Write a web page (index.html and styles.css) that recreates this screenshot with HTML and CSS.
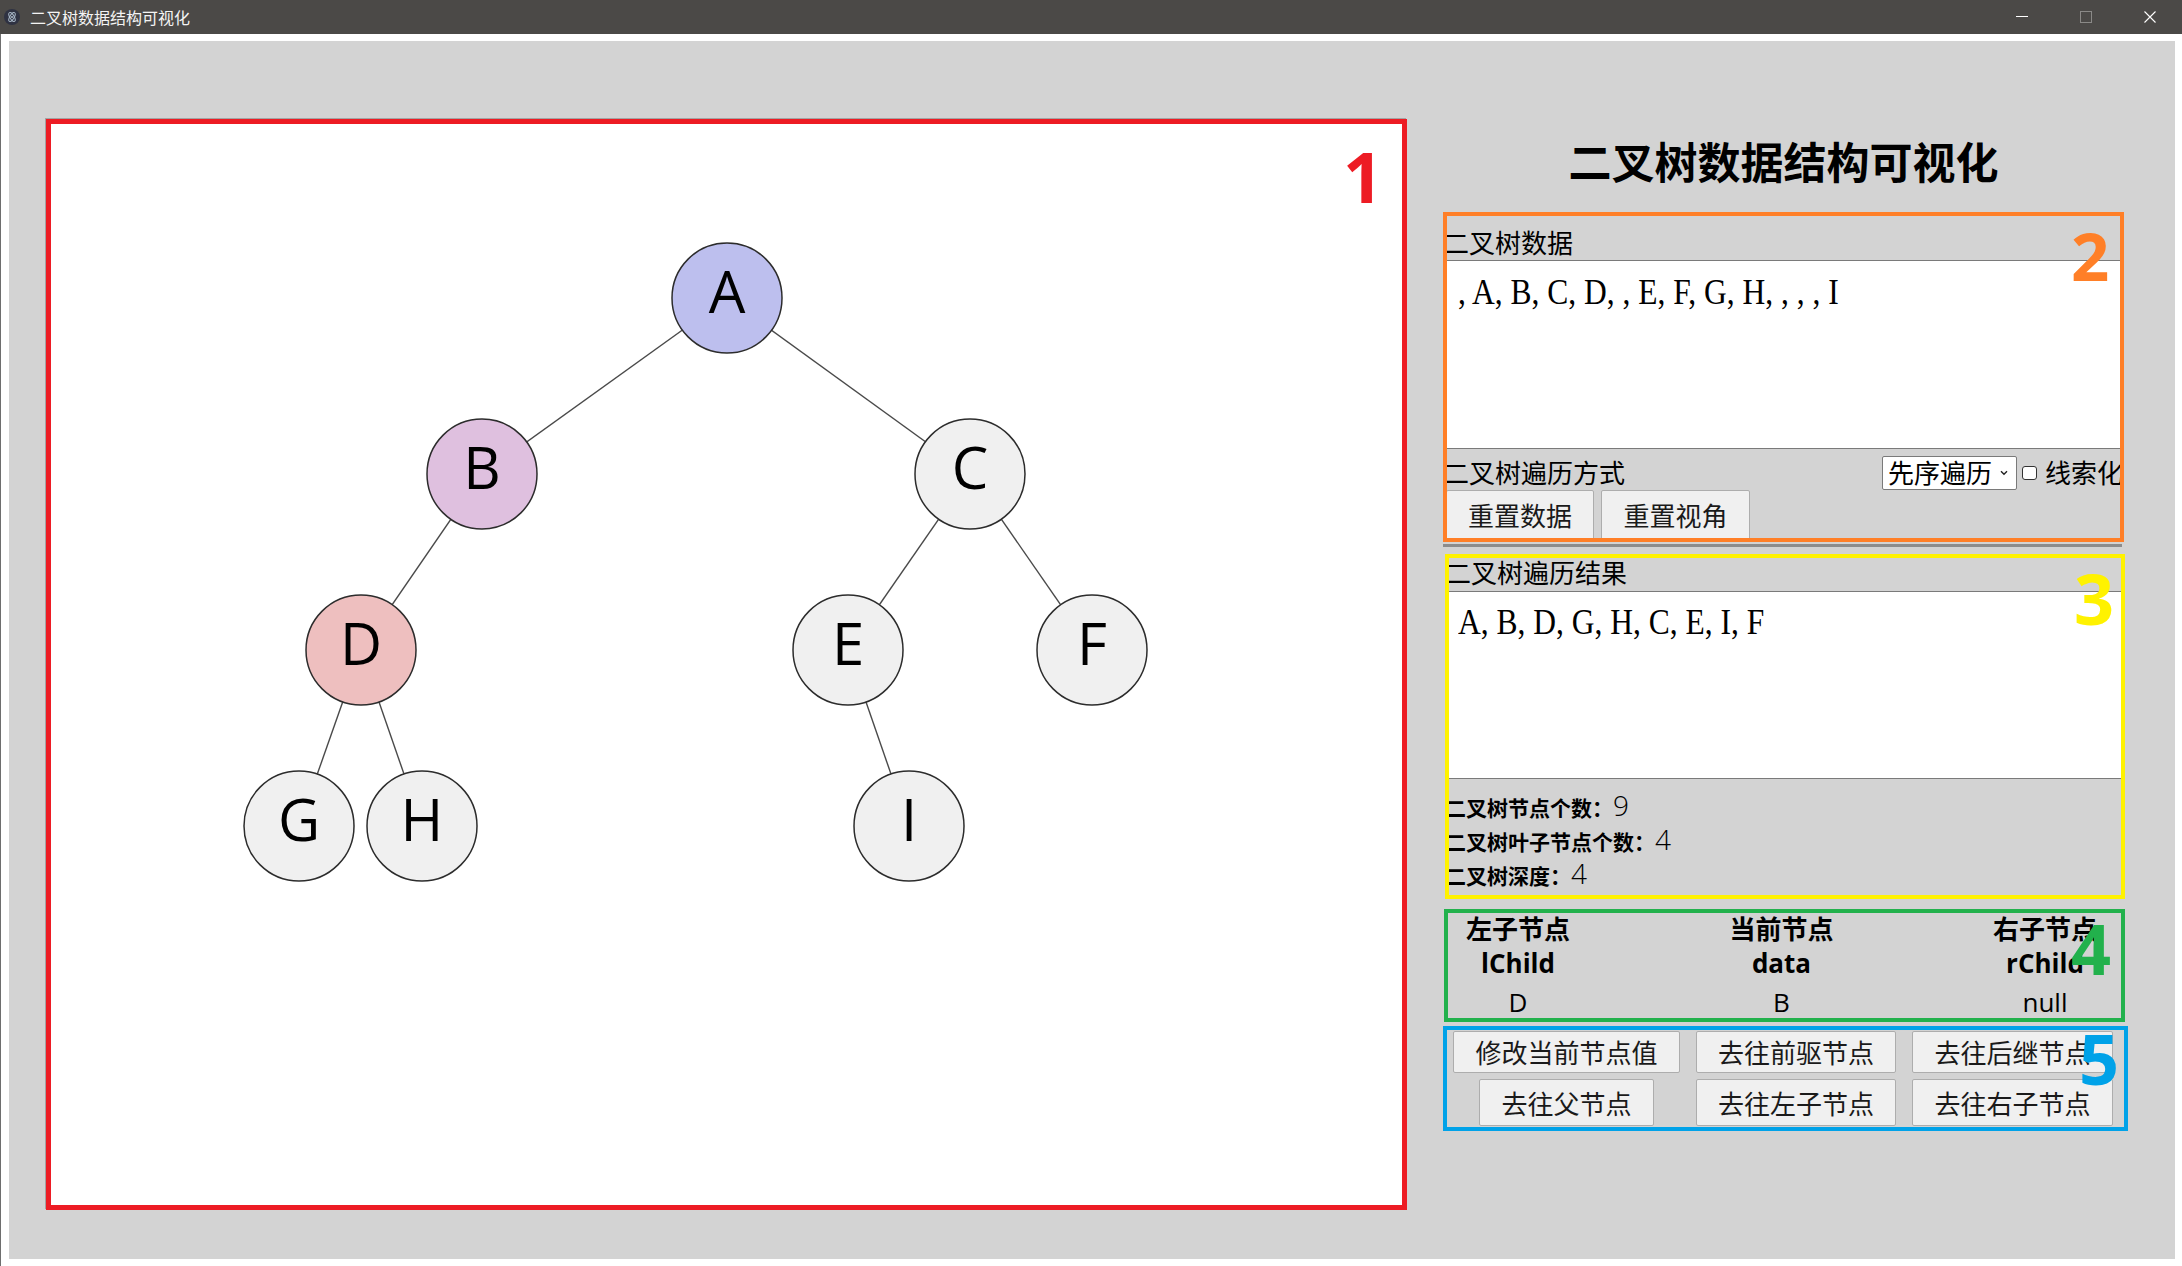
FILE: index.html
```html
<!DOCTYPE html>
<html lang="zh-CN">
<head>
<meta charset="utf-8">
<title>二叉树数据结构可视化</title>
<link rel="stylesheet" href="styles.css">
</head>
<body>
<div class="titlebar">
  <div class="tb-left">
    <svg class="tb-icon" viewBox="0 0 16 16"><circle cx="8" cy="8" r="8" fill="#2f3242"/><g fill="none" stroke="#a9b8c8" stroke-width="1"><ellipse cx="8" cy="8" rx="5" ry="2.2" transform="rotate(60 8 8)"/><ellipse cx="8" cy="8" rx="5" ry="2.2" transform="rotate(-60 8 8)"/></g><circle cx="8" cy="8" r="1.1" fill="#a9b8c8"/></svg>
    <span class="tb-title">二叉树数据结构可视化</span>
  </div>
  <div class="tb-controls">
    <span class="tb-btn"><svg width="12" height="12" viewBox="0 0 12 12"><path d="M0 5.5h12" stroke="#fff" stroke-width="1"/></svg></span>
    <span class="tb-btn"><svg width="12" height="12" viewBox="0 0 12 12"><rect x="0.5" y="0.5" width="11" height="11" fill="none" stroke="#8a8987" stroke-width="1"/></svg></span>
    <span class="tb-btn"><svg width="12" height="12" viewBox="0 0 12 12"><path d="M0.5 0.5l11 11M11.5 0.5l-11 11" stroke="#fff" stroke-width="1.1"/></svg></span>
  </div>
</div>
<div class="frame">
  <div class="app">
    <div class="canvas-box">
      <svg class="tree" width="1351" height="1081" viewBox="0 0 1351 1081">
        <g class="edges">
          <line x1="676" y1="174" x2="431" y2="350"/>
          <line x1="676" y1="174" x2="919" y2="350"/>
          <line x1="431" y1="350" x2="310" y2="526"/>
          <line x1="919" y1="350" x2="797" y2="526"/>
          <line x1="919" y1="350" x2="1041" y2="526"/>
          <line x1="310" y1="526" x2="248" y2="702"/>
          <line x1="310" y1="526" x2="371" y2="702"/>
          <line x1="797" y1="526" x2="858" y2="702"/>
        </g>
        <g class="nodes">
          <circle class="n-a" cx="676" cy="174" r="55"/>
          <circle class="n-b" cx="431" cy="350" r="55"/>
          <circle cx="919" cy="350" r="55"/>
          <circle class="n-d" cx="310" cy="526" r="55"/>
          <circle cx="797" cy="526" r="55"/>
          <circle cx="1041" cy="526" r="55"/>
          <circle cx="248" cy="702" r="55"/>
          <circle cx="371" cy="702" r="55"/>
          <circle cx="858" cy="702" r="55"/>
        </g>
        <g class="labels">
          <text x="676" y="189">A</text>
          <text x="431" y="365">B</text>
          <text x="919" y="365">C</text>
          <text x="310" y="541">D</text>
          <text x="797" y="541">E</text>
          <text x="1041" y="541">F</text>
          <text x="248" y="717">G</text>
          <text x="371" y="717">H</text>
          <text x="858" y="717">I</text>
        </g>
      </svg>
      <span class="tag tag-1">1</span>
    </div>

    <div class="side">
      <h1 class="side-title">二叉树数据结构可视化</h1>

      <section class="box box-orange">
        <div class="box-inner">
          <div class="label orange-label">二叉树数据</div>
          <div class="textbox tb-data"><span class="tb-text">, A, B, C, D, , E, F, G, H, , , , I</span></div>
          <div class="row-mode">
            <span class="label mode-label">二叉树遍历方式</span>
            <span class="select">先序遍历<svg width="8" height="6" viewBox="0 0 8 6"><path d="M1 1.2l3 3 3-3" fill="none" stroke="#222" stroke-width="1.4"/></svg></span>
            <span class="checkbox"></span>
            <span class="thread">线索化</span>
          </div>
          <div class="btn-row">
            <span class="btn btn-w148">重置数据</span>
            <span class="btn btn-w149">重置视角</span>
          </div>
        </div>
        <span class="tag tag-2">2</span>
      </section>

      <div class="sep"></div>

      <section class="box box-yellow">
        <div class="box-inner">
          <div class="label yellow-label">二叉树遍历结果</div>
          <div class="textbox tb-result"><span class="tb-text">A, B, D, G, H, C, E, I, F</span></div>
          <div class="stats">
            <div class="stat"><span class="stat-k">二叉树节点个数：</span><span class="stat-v">9</span></div>
            <div class="stat"><span class="stat-k">二叉树叶子节点个数：</span><span class="stat-v">4</span></div>
            <div class="stat"><span class="stat-k">二叉树深度：</span><span class="stat-v">4</span></div>
          </div>
        </div>
        <span class="tag tag-3">3</span>
      </section>

      <section class="box box-green">
        <div class="box-inner">
          <div class="node-cols">
            <div class="col"><div class="h1">左子节点</div><div class="h2">lChild</div><div class="v">D</div></div>
            <div class="col"><div class="h1">当前节点</div><div class="h2">data</div><div class="v">B</div></div>
            <div class="col"><div class="h1">右子节点</div><div class="h2">rChild</div><div class="v">null</div></div>
          </div>
        </div>
        <span class="tag tag-4">4</span>
      </section>

      <section class="box box-blue">
        <div class="box-inner">
          <div class="btn-grid">
            <span class="btn">修改当前节点值</span>
            <span class="btn">去往前驱节点</span>
            <span class="btn">去往后继节点</span>
            <span class="btn btn-parent">去往父节点</span>
            <span class="btn">去往左子节点</span>
            <span class="btn">去往右子节点</span>
          </div>
        </div>
        <span class="tag tag-5">5</span>
      </section>
    </div>
  </div>
</div>
</body>
</html>
```

FILE: styles.css
```css
* { box-sizing: border-box; margin: 0; padding: 0; }
html, body { width: 2182px; height: 1266px; overflow: hidden; background: #fff; }
body { font-family: "Open Sans", "Noto Sans CJK SC", sans-serif; color: #000; }

/* title bar */
.titlebar { height: 34px; background: #4b4947; display: flex; align-items: center; justify-content: space-between; }
.tb-left { display: flex; align-items: center; padding-left: 4px; gap: 10px; }
.tb-icon { width: 16px; height: 16px; display: block; }
.tb-title { font: 16px/20px "Noto Sans CJK SC", sans-serif; color: #f4f4f4; }
.tb-controls { display: flex; height: 34px; }
.tb-btn { width: 64px; height: 34px; display: flex; align-items: center; justify-content: center; }
.tb-btn svg { display: block; }

/* window frame */
.frame { height: 1232px; padding: 7px 7px 7px 8px; border-left: 1px solid #6e6e6e; background: #fff; }
.app { height: 100%; background: #d3d3d3; display: flex; align-items: flex-start; padding: 78px 0 0 37px; }

/* canvas */
.canvas-box { position: relative; flex: none; width: 1361px; height: 1091px; border: 5px solid #ed1c24; background: #fff; box-shadow: -1px -1px 0 #a3a3a3; }
.tree { display: block; }
.edges line { stroke: #4a4a4a; stroke-width: 1.4; }
.nodes circle { fill: #f0f0f0; stroke: #2c2c2c; stroke-width: 1.5; }
.nodes .n-a { fill: #bdbfee; }
.nodes .n-b { fill: #dfc0df; }
.nodes .n-d { fill: #eebfbf; }
.labels text { font-family: "Open Sans", sans-serif; font-size: 58px; text-anchor: middle; fill: #000; }

/* annotation tags */
.tag { position: absolute; font: 700 70px/1 "Open Sans", sans-serif; }
.tag-1 { color: #ed1c24; left: 1292px; top: 17px; }
.tag-2 { color: #ff7f27; left: 624px; top: 6px; font-size: 67px; }
.tag-3 { color: #fff200; left: 625px; top: 5px; }
.tag-4 { color: #22b14c; left: 623px; top: 0; }
.tag-5 { color: #00a2e8; left: 632px; top: -7px; }

/* side panel */
.side { flex: none; width: 685px; margin-left: 36px; display: flex; flex-direction: column; }
.side-title { width: 681px; font: 700 43px/50px "Noto Sans CJK SC", sans-serif; text-align: center; margin: 16px 0 27px; }

.box { position: relative; flex: none; }
.box-inner { width: 100%; height: 100%; overflow: hidden; }
.label { font-size: 26px; line-height: 34px; margin-left: -4px; white-space: nowrap; }

.textbox { background: #fff; border-top: 1px solid #7a7a7a; border-bottom: 1px solid #7a7a7a; font: 35px/40px "Liberation Serif", serif; white-space: pre; }
.tb-text { display: inline-block; transform: scaleX(0.9); transform-origin: 0 0; }

/* box 2 */
.box-orange { width: 681px; height: 330px; border: 4px solid #ff7f27; }
.orange-label { padding-top: 10px; }
.tb-data { height: 189px; padding: 12px 0 0 11px; }
.row-mode { display: flex; align-items: center; height: 41px; padding-top: 7px; margin-right: -3px; }
.mode-label { flex: 1; }
.select { flex: none; width: 135px; height: 34px; border: 1px solid #7a7a7a; border-radius: 2px; background: #fff; display: flex; align-items: center; padding-left: 5px; font-size: 26px; line-height: 32px; margin-right: 5px; white-space: nowrap; }
.select svg { margin-left: 8px; display: block; }
.checkbox { flex: none; width: 15px; height: 14px; border: 1px solid #333; border-radius: 3px; background: #fff; margin-right: 8px; }
.thread { flex: none; font-size: 26px; line-height: 34px; white-space: nowrap; }

.btn-row { display: flex; gap: 7px; margin-left: -1px; }
.btn { display: flex; align-items: center; justify-content: center; height: 50px; background: #f0f0f0; border: 1px solid #adadad; border-radius: 2px; font-size: 26px; color: #1a1a1a; white-space: nowrap; }
.btn-w148 { width: 148px; }
.btn-w149 { width: 149px; }

.sep { width: 679px; height: 3px; background: #8c8c8c; margin: 2px 0 7px 0; }

/* box 3 */
.box-yellow { width: 680px; height: 345px; margin-left: 2px; border: 4px solid #fff200; }
.yellow-label { line-height: 30px; margin-bottom: 3px; }
.tb-result { height: 188px; padding: 11px 0 0 9px; }
.stats { padding-top: 9px; }
.stat { display: flex; align-items: baseline; height: 34px; line-height: 34px; }
.stat-k { font-weight: 700; font-size: 21px; margin-left: -4px; }
.stat-v { font-size: 28px; font-weight: 300; }

/* box 4 */
.box-green { width: 681px; height: 113px; margin: 10px 0 0 1px; border: 4px solid #22b14c; }
.node-cols { display: flex; justify-content: space-between; padding: 0 24px 0 18px; }
.col { text-align: center; font-size: 26px; }
.col .h1 { font-weight: 700; line-height: 33px; }
.col .h2 { font-weight: 700; line-height: 34px; }
.col .v { line-height: 34px; margin-top: 5px; }

/* box 5 */
.box-blue { width: 685px; height: 105px; margin-top: 4px; border: 4px solid #00a2e8; }
.btn-grid { display: grid; grid-template-columns: 227px 200px 201px; grid-template-rows: 42px 47px; column-gap: 16px; row-gap: 6px; padding: 1px 0 0 6px; }
.btn-grid .btn { height: auto; }
.btn-grid .btn-parent { justify-self: center; width: 175px; }
```
